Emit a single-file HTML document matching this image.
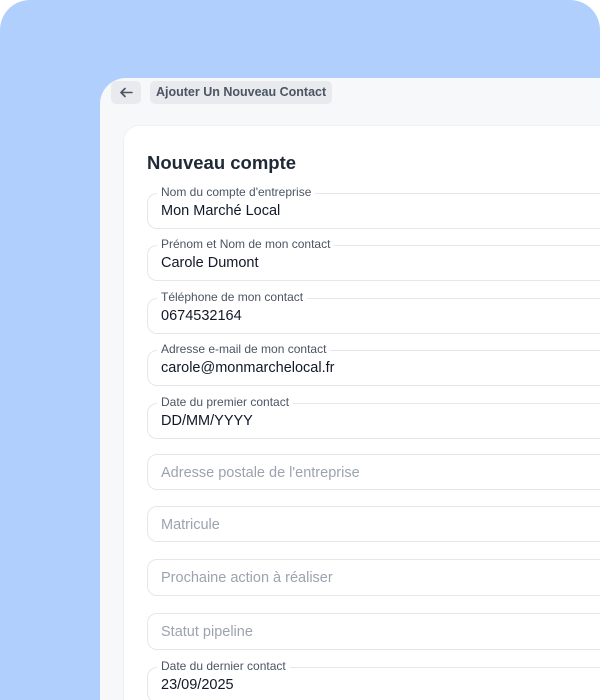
<!DOCTYPE html>
<html><head><meta charset="utf-8"><style>
*{margin:0;padding:0;box-sizing:border-box}
html,body{width:600px;height:700px;overflow:hidden}
body{background:#fff;font-family:"Liberation Sans",sans-serif;position:relative}
.bg{position:absolute;left:0;top:0;width:600px;height:700px;background:#b1cffd;border-radius:30px 30px 0 0}
.panel{position:absolute;left:100px;top:78px;width:500px;height:622px;background:#f7f8f9;border-radius:26px 0 0 0}
.back{position:absolute;left:111px;top:81px;width:30px;height:23px;background:#e8eaed;border-radius:5px}
.title{position:absolute;left:150px;top:81px;height:23px;padding:0 6px;background:#e8eaed;border-radius:5px;font-size:12.5px;font-weight:bold;color:#4b5563;line-height:23px}
.card{position:absolute;left:123px;top:125px;width:477px;height:575px;background:#fff;border-radius:16px 0 0 0;border:1px solid #eef0f2;border-right:none;border-bottom:none}
h1{position:absolute;left:147px;top:152px;font-size:18.5px;font-weight:bold;color:#1f2937}
.f{position:absolute;left:147px;width:470px;height:36px;border:1px solid #e5e7eb;border-radius:10px}
.f .l{position:absolute;left:9px;top:-9px;background:#fff;padding:0 4px;font-size:12px;color:#4b5563}
.f .v{position:absolute;left:13px;top:9px;font-size:14.5px;color:#111827}
.f .p{position:absolute;left:13px;top:10px;font-size:14.5px;color:#9ca3af}
</style></head><body>
<div class="bg"></div>
<div class="panel"></div>
<div class="back"><svg width="30" height="23" viewBox="0 0 30 23"><path d="M21 11.5H10M14 7.5l-4 4 4 4" stroke="#4b5563" stroke-width="1.6" fill="none" stroke-linecap="round" stroke-linejoin="round"/></svg></div>
<div class="title">Ajouter Un Nouveau Contact</div>
<div class="card"></div>
<h1>Nouveau compte</h1>
<div class="f" style="top:193px"><span class="l">Nom du compte d'entreprise</span><span class="v">Mon Marché Local</span></div>
<div class="f" style="top:245px"><span class="l">Prénom et Nom de mon contact</span><span class="v">Carole Dumont</span></div>
<div class="f" style="top:298px"><span class="l">Téléphone de mon contact</span><span class="v">0674532164</span></div>
<div class="f" style="top:350px"><span class="l">Adresse e-mail de mon contact</span><span class="v">carole@monmarchelocal.fr</span></div>
<div class="f" style="top:403px"><span class="l">Date du premier contact</span><span class="v">DD/MM/YYYY</span></div>
<div class="f" style="top:454px"><span class="p">Adresse postale de l'entreprise</span></div>
<div class="f" style="top:506px"><span class="p">Matricule</span></div>
<div class="f" style="top:559px;height:37px"><span class="p">Prochaine action à réaliser</span></div>
<div class="f" style="top:613px;height:37px"><span class="p">Statut pipeline</span></div>
<div class="f" style="top:667px"><span class="l">Date du dernier contact</span><span class="v">23/09/2025</span></div>
</body></html>
